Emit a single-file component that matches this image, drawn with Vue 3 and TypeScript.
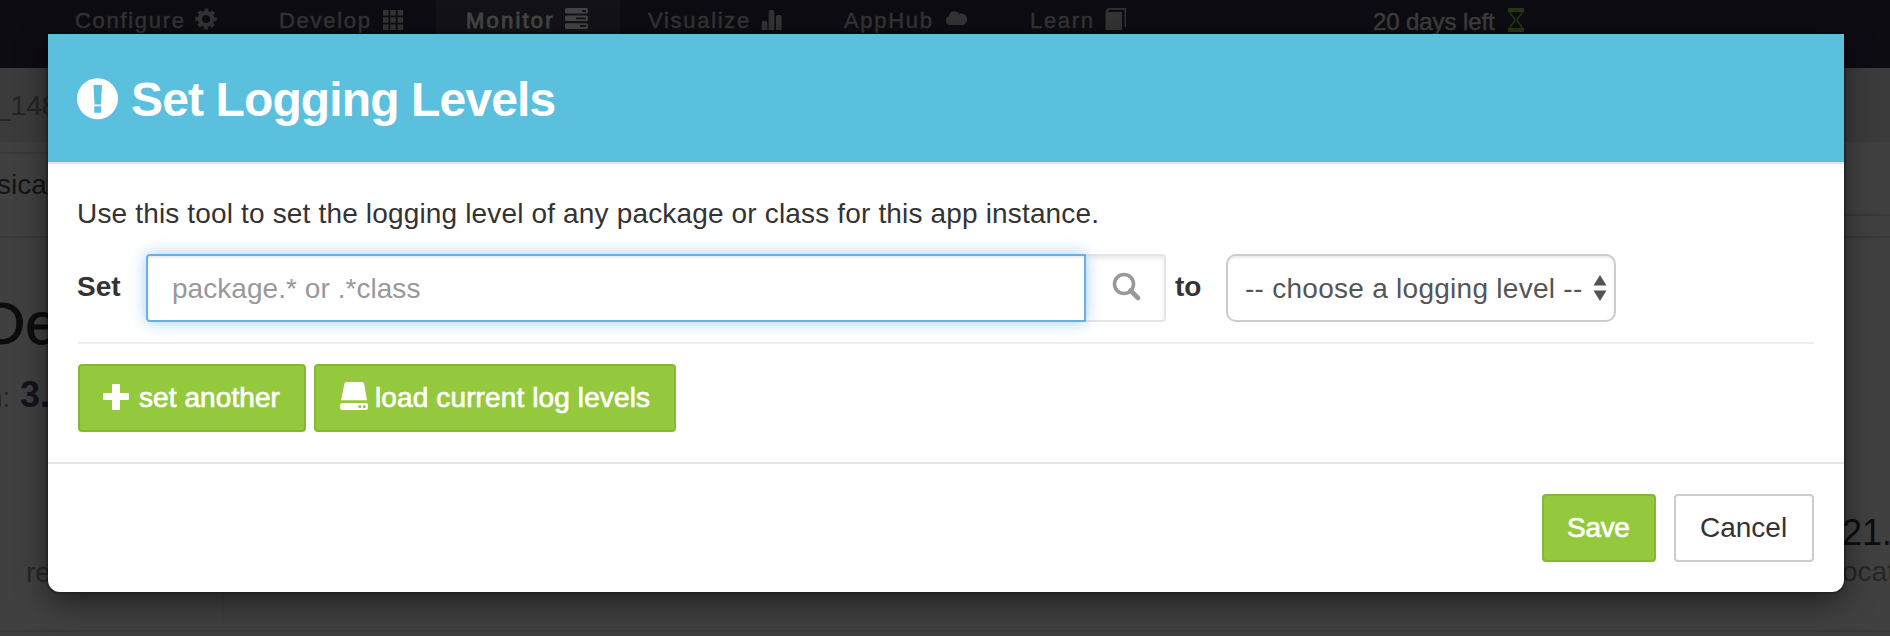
<script setup lang="ts">
import { ref } from 'vue'

interface NavItem {
  label: string
  icon: string
  cls: string
}

const navItems: NavItem[] = [
  { label: 'Configure', icon: 'cog', cls: 'configure' },
  { label: 'Develop', icon: 'grid', cls: 'develop' },
  { label: 'Monitor', icon: 'tasks', cls: 'monitor' },
  { label: 'Visualize', icon: 'stats', cls: 'visualize' },
  { label: 'AppHub', icon: 'cloud', cls: 'apphub' },
  { label: 'Learn', icon: 'book', cls: 'learn' },
]

const query = ref('')
const level = ref('')
</script>

<template>
  <div class="page">
    <nav class="navbar">
      <a v-for="item in navItems" :key="item.label" class="nav-item" :class="item.cls">
        <span class="nav-label">{{ item.label }}</span>
        <svg v-if="item.icon === 'cog'" width="22" height="22" viewBox="0 0 22 22">
          <circle cx="11" cy="11" r="6.2" fill="none" stroke="currentColor" stroke-width="4.200" />
          <circle cx="11" cy="11" r="9" fill="none" stroke="currentColor" stroke-width="3.200" stroke-dasharray="3.800 3.270" stroke-dashoffset="1.900" />
        </svg>
        <svg v-else-if="item.icon === 'grid'" width="22" height="22" viewBox="0 0 22 22">
          <path fill="currentColor" d="M1 2h5.500v5.500H1zM8.300 2h5.500v5.500H8.300zM15.600 2h5.500v5.500h-5.500zM1 9.300h5.500v5.500H1zM8.300 9.300h5.500v5.500H8.300zM15.600 9.300h5.500v5.500h-5.500zM1 16.500h5.500V22H1zM8.300 16.500h5.500V22H8.300zM15.600 16.500h5.500V22h-5.500z" />
        </svg>
        <svg v-else-if="item.icon === 'tasks'" width="23" height="22" viewBox="0 0 23 22">
          <path fill="currentColor" fill-rule="evenodd" d="M1.500 0h20Q23 0 23 1.500V4q0 1.500-1.500 1.500h-20Q0 5.500 0 4V1.500Q0 0 1.500 0zM17 2v2h4V2zM1.500 7.500h20Q23 7.500 23 9v2.500q0 1.500-1.500 1.500h-20Q0 13 0 11.500V9q0-1.500 1.500-1.500zM11 9.500v1.800h10V9.500zM1.500 15.200h20q1.500 0 1.500 1.500v2.800q0 1.500-1.500 1.500h-20Q0 21 0 19.500v-2.800q0-1.500 1.500-1.500zM15 17v2h6v-2z" />
        </svg>
        <svg v-else-if="item.icon === 'stats'" width="22" height="22" viewBox="0 0 22 22">
          <path fill="currentColor" d="M.700 15q0-2 1.500-2h2.600q1.500 0 1.500 2v7H.700zM7.700 4q0-2 1.500-2h2.600q1.500 0 1.500 2v18H7.700zM15 9q0-2 1.500-2h2.600q1.500 0 1.500 2v13H15z" />
        </svg>
        <svg v-else-if="item.icon === 'cloud'" width="24" height="22" viewBox="0 0 24 22">
          <path fill="currentColor" d="M5 17a4.500 4.500 0 0 1-1.200-8.700A6 6 0 0 1 14.700 5.800 5.600 5.600 0 1 1 18 17z" />
        </svg>
        <svg v-else width="22" height="22" viewBox="0 0 22 22">
          <path fill="currentColor" d="M.500 5Q1 0 4.500 0H21v18.500q0 1-1.500 1V1.800H5Q3.500 1.800 3 4h14v18H.500z" />
        </svg>
      </a>
      <span class="trial">20 days left</span>
      <svg class="hourglass" width="18" height="24" viewBox="0 0 18 24">
        <path fill="currentColor" d="M1 0h16v4H1zM1 20h16v4H1z" />
        <path fill="none" stroke="currentColor" stroke-width="1.600" d="M3 3c0 5 5 6 5 9s-5 4-5 9M15 3c0 5-5 6-5 9s5 4 5 9" />
      </svg>
    </nav>
    <div class="crumb"><span>_148</span></div>
    <div class="tabs">
      <div class="tab-left"><span>sica</span></div>
      <div class="tab-right"></div>
    </div>
    <div class="content">
      <div class="app-name">De</div>
      <div class="version"><span>n:</span><b>3.</b></div>
      <div class="metrics">
        <div class="metric-left">re</div>
        <div class="metric-right"><span class="value">21.</span><span class="caption">ocat</span></div>
      </div>
    </div>
    <div class="bottom"></div>

    <section class="modal">
      <header class="modal-header">
        <svg width="42" height="42" viewBox="0 0 42 42">
          <circle cx="20.500" cy="20.700" r="20.500" fill="#fff" />
          <path fill="#5bc0de" d="M16.500 7h8.500l-1 19.500h-6.500zM17.200 28.200h6.800v6.500h-6.800z" />
        </svg>
        <h1>Set Logging Levels</h1>
      </header>
      <div class="modal-body">
        <p>Use this tool to set the logging level of any package or class for this app instance.</p>
        <div class="form-row">
          <label class="set"><span>Set</span></label>
          <input v-model="query" class="field" placeholder="package.* or .*class" />
          <span class="addon">
            <svg width="30" height="30" viewBox="0 0 30 30">
              <circle cx="12" cy="12" r="9.500" fill="none" stroke="#999" stroke-width="3.600" />
              <path d="M18.500 18.500L26 26" stroke="#999" stroke-width="4.600" stroke-linecap="round" />
            </svg>
          </span>
          <label class="to">to</label>
          <div class="select-wrap">
            <select v-model="level">
              <option value="">-- choose a logging level --</option>
            </select>
            <svg class="arrows" width="14" height="26" viewBox="0 0 14 26">
              <path fill="#555" d="M7 0l6.500 10.500H.500zM7 26L.500 15.500h13z" />
            </svg>
          </div>
        </div>
        <hr />
        <div class="actions">
          <button class="btn green another">
            <svg width="26" height="28" viewBox="0 0 26 28">
              <path fill="#fff" d="M10 1h6q1 0 1 1v8h8q1 0 1 1v5q0 1-1 1h-8v9q0 1-1 1h-6q-1 0-1-1v-9H1q-1 0-1-1v-5q0-1 1-1h8V2q0-1 1-1z" />
            </svg>
            <span>set another</span>
          </button>
          <button class="btn green load">
            <svg width="28" height="28" viewBox="0 0 28 28">
              <path fill="#fff" fill-rule="evenodd" d="M6 0h16q1.500 0 2 1.500L27 18.300H1L4.500 1.500Q5 0 6 0zM2 21h24q2 0 2 2v3q0 2-2 2H2q-2 0-2-2v-3q0-2 2-2zM18.500 23.300v2.700h2.500v-2.700zM23 23.300v2.700h2.500v-2.700z" />
            </svg>
            <span>load current log levels</span>
          </button>
        </div>
      </div>
      <footer class="modal-footer">
        <button class="btn green save"><span>Save</span></button>
        <button class="btn cancel"><span>Cancel</span></button>
      </footer>
    </section>
  </div>
</template>

<style>
body {
  margin: 0;
  overflow: hidden;
}
</style>

<style scoped>
* {
  box-sizing: border-box;
}
.page {
  position: relative;
  width: 1890px;
  height: 636px;
  overflow: hidden;
  display: flex;
  flex-direction: column;
  background: #404040;
  font-family: "Liberation Sans", Arial, sans-serif;
  font-size: 28px;
}
.page svg {
  flex: none;
  display: block;
}
.navbar {
  height: 68px;
  flex: none;
  display: flex;
  align-items: flex-start;
  background: #0e0c13;
  color: #333;
  font-size: 22px;
  line-height: 26px;
}
.nav-item {
  display: flex;
  height: 68px;
  padding-top: 8px;
  justify-content: space-between;
  -webkit-text-stroke: 0.5px currentColor;
}
.nav-label {
  letter-spacing: 1.7px;
  white-space: nowrap;
}
.configure { width: 142px; margin-left: 75px; padding-right: 0; }
.develop { width: 125px; margin-left: 62px; }
.monitor { width: 184px; margin-left: 32px; padding-left: 30px; padding-right: 32px; background: #131218; color: #444; -webkit-text-stroke: 1px #444; }
.monitor .nav-label { letter-spacing: 2.200px; }
.visualize { width: 135px; margin-left: 28px; }
.apphub { width: 125px; margin-left: 61px; }
.learn { width: 97px; margin-left: 61px; }
.trial {
  width: 130px;
  margin-left: 246px;
  padding-top: 9px;
  white-space: nowrap;
  color: #3d3d3d;
  font-size: 24px;
  letter-spacing: -0.1px;
  -webkit-text-stroke: 0.5px #3d3d3d;
}
.hourglass {
  margin: 8px 0 0 4px;
  color: #253911;
}
.crumb {
  height: 74px;
  flex: none;
  background: #3b3b3b;
  color: #242424;
  padding-top: 22px;
  line-height: 32px;
}
.crumb span {
  margin-left: -5px;
}
.tabs {
  height: 96px;
  flex: none;
  display: flex;
  justify-content: space-between;
  border-bottom: 2px solid #383838;
}
.tab-left {
  width: 900px;
  margin-top: 10px;
  padding-top: 15px;
  border-top: 2px solid #383838;
  color: #141414;
  line-height: 32px;
}
.tab-left span {
  margin-left: -3px;
}
.tab-right {
  width: 900px;
  height: 74px;
  border-bottom: 2px solid #383838;
}
.content {
  height: 382px;
  flex: none;
  width: 100%;
}
.app-name {
  padding-top: 52px;
  margin-left: -18px;
  font-size: 60px;
  line-height: 68px;
  color: #0d0d0d;
  -webkit-text-stroke: 0.8px #0d0d0d;
}
.version {
  display: flex;
  align-items: baseline;
  padding-top: 17px;
  line-height: 40px;
  color: #262626;
}
.version span { margin-left: -13px; width: 33px; white-space: nowrap; }
.version b { font-size: 36px; color: #15121d; }
.metrics {
  display: flex;
  justify-content: space-between;
  height: 205px;
}
.metric-left {
  width: 224px;
  height: 205px;
  border-right: 2px solid #3c3c3c;
  padding: 139px 0 0 26px;
  line-height: 32px;
  color: #262626;
}
.metric-right {
  width: 48px;
  padding-top: 94px;
  display: flex;
  flex-direction: column;
  white-space: nowrap;
}
.value { font-size: 36px; line-height: 42px; color: #0d0d0d; }
.caption { line-height: 36px; color: #262626; }
.bottom {
  height: 16px;
  flex: none;
  margin-top: 10px;
  border-top: 2px solid #383838;
  background: #3e3e3e;
}

.modal {
  position: absolute;
  left: 48px;
  top: 34px;
  width: 1796px;
  height: 558px;
  border-radius: 0 0 12px 12px;
  background: #fff;
  box-shadow: 0 10px 30px rgba(0, 0, 0, 0.5), 0 0 0 2px rgba(0, 0, 0, 0.2);
  color: #333;
}
.modal-header {
  height: 130px;
  display: flex;
  padding: 44px 29px 0;
  background: #5bc0de;
  border-bottom: 2px solid #e5e5e5;
  color: #fff;
}
h1 {
  margin: -6px 0 0 12px;
  font-size: 48px;
  line-height: 55px;
  font-weight: bold;
  letter-spacing: -0.880px;
  white-space: nowrap;
}
.modal-body {
  height: 300px;
  padding: 30px;
  border-bottom: 2px solid #e5e5e5;
}
p {
  margin: 3px 0 23px -1px;
  line-height: 34px;
  letter-spacing: 0.160px;
  white-space: nowrap;
}
.form-row {
  display: flex;
  height: 68px;
}
label {
  font-weight: bold;
  line-height: 65px;
}
.set { width: 68px; }
.set span { margin-left: -1px; }
.field {
  width: 940px;
  height: 68px;
  padding: 1px 24px 0;
  border: 2px solid #66afe9;
  border-radius: 4px 0 0 4px;
  outline: none;
  background: #fff;
  font: inherit;
  z-index: 1;
  letter-spacing: 0.050px;
  box-shadow: inset 0 2px 2px rgba(0, 0, 0, 0.075), 0 0 16px rgba(102, 175, 233, 0.6);
}
.field::placeholder { color: #999; opacity: 1; }
.addon {
  width: 80px;
  height: 68px;
  padding: 16px 0 0 26px;
  border: 2px solid #e5e5e5;
  border-left: 0;
  border-radius: 0 4px 4px 0;
  box-shadow: inset 0 3px 4px rgba(0, 0, 0, 0.075);
}
.to { width: 51px; margin-left: 9px; }
.select-wrap {
  position: relative;
  width: 390px;
  height: 68px;
}
select {
  width: 100%;
  height: 100%;
  appearance: none;
  border: 2px solid #ccc;
  border-radius: 10px;
  padding: 0 0 0 17px;
  background: #fff;
  color: #555;
  font: inherit;
  letter-spacing: 0.270px;
  box-shadow: inset 0 2px 2px rgba(0, 0, 0, 0.075);
}
.arrows {
  position: absolute;
  right: 9px;
  top: 21px;
}
hr {
  margin: 20px 0;
  border: 0;
  height: 2px;
  background: #eee;
}
.actions { display: flex; gap: 8px; }
.btn {
  height: 68px;
  display: flex;
  align-items: flex-start;
  padding: 16px 0 0 24px;
  border: 2px solid #ccc;
  border-radius: 4px;
  background: #fff;
  color: #333;
  font: inherit;
  line-height: 32px;
  white-space: nowrap;
}
.green {
  background: #94c93d;
  border-color: #86b833;
  color: #fff;
  -webkit-text-stroke: 0.7px #fff;
}
.another { width: 228px; padding-left: 23px; }
.another span { margin-left: 10px; letter-spacing: 0.080px; }
.another svg { margin-top: 1px; }
.load { width: 362px; }
.load span { margin-left: 7px; letter-spacing: 0.120px; }
.modal-footer {
  display: flex;
  justify-content: flex-end;
  gap: 18px;
  padding: 30px;
}
.save { width: 114px; padding-left: 23px; letter-spacing: -0.300px; }
.cancel { width: 140px; }
</style>
